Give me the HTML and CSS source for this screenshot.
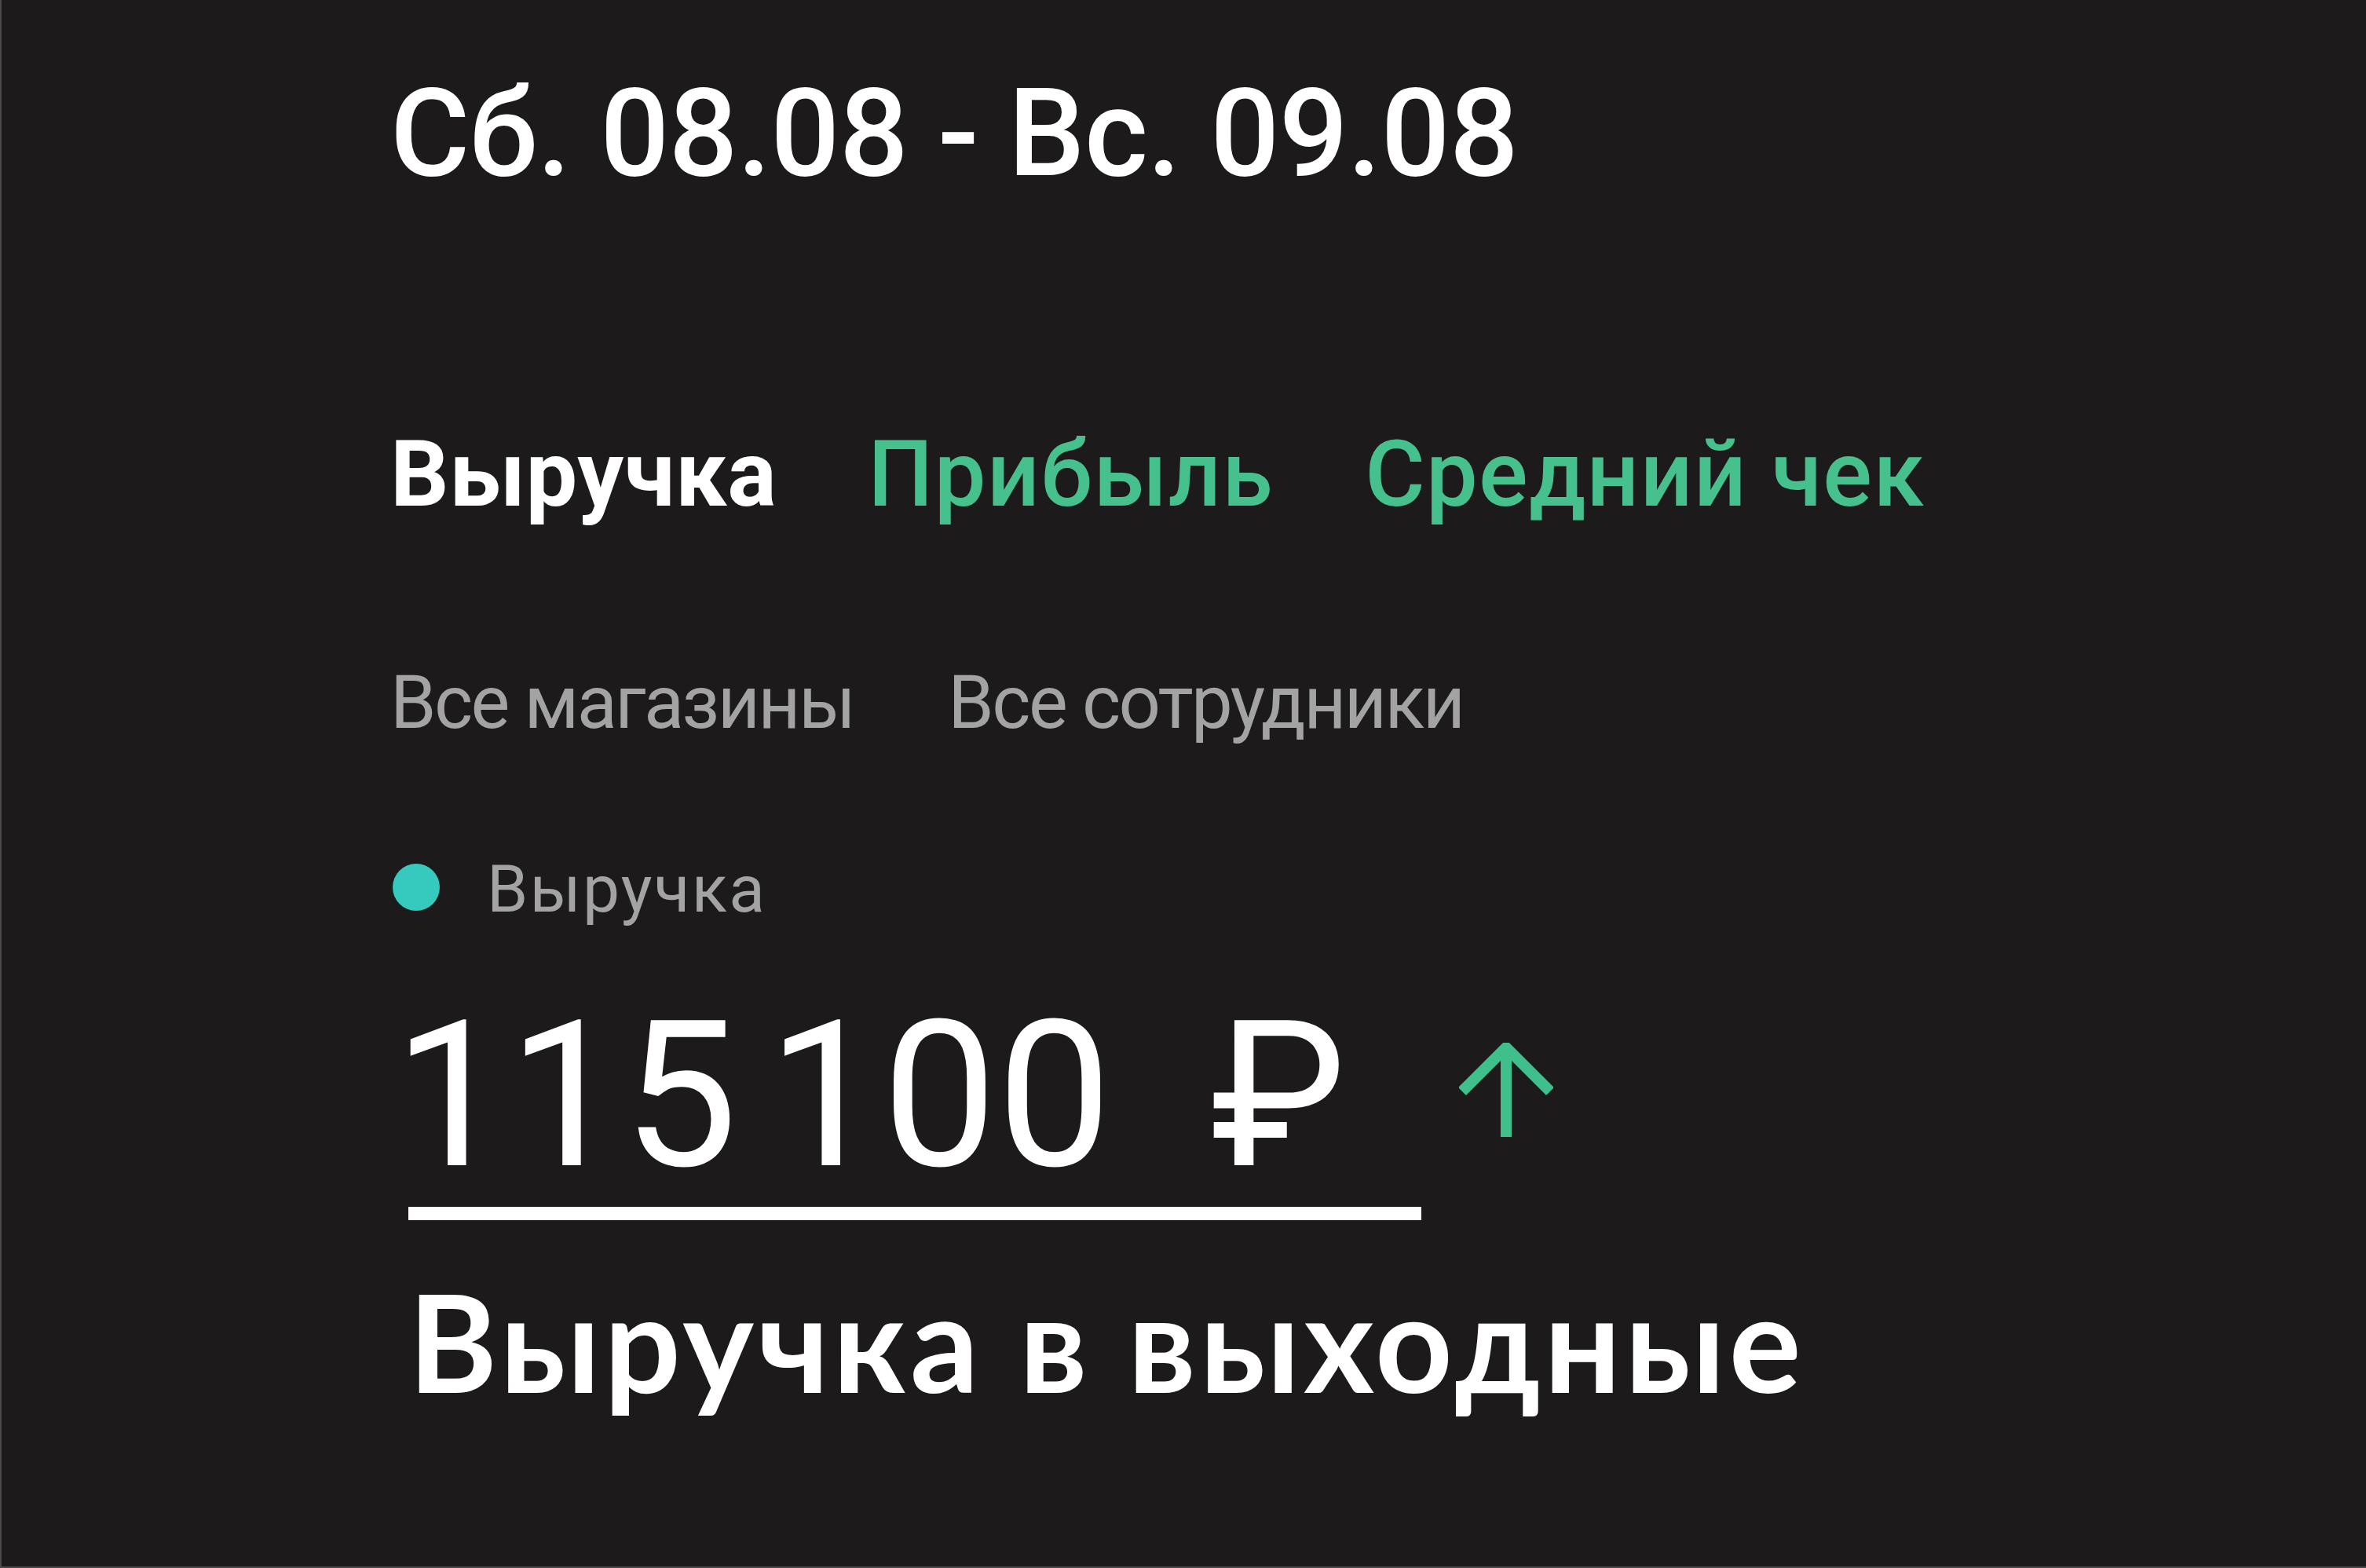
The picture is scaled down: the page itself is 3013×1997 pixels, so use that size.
FILE: index.html
```html
<!DOCTYPE html>
<html lang="ru">
<head>
<meta charset="utf-8">
<title>Выручка в выходные</title>
<link rel="stylesheet" href="styles.css">
</head>
<body>
<main class="screen">
  <section class="card">
    <h1 class="period">Сб. 08.08 - Вс. 09.08</h1>
    <nav class="tabs">
      <span class="tab tab-active">Выручка</span>
      <span class="tab">Прибыль</span>
      <span class="tab">Средний чек</span>
    </nav>
    <div class="filters">
      <span class="filter">Все магазины</span>
      <span class="filter">Все сотрудники</span>
    </div>
    <div class="legend">
      <span class="legend-dot"></span>
      <span class="legend-label">Выручка</span>
    </div>
    <div class="amount">
      <span class="amount-group">115</span>
      <span class="amount-group amount-group-next">100</span>
      <span class="amount-cur">₽</span>
      <svg class="amount-arrow" viewBox="0 0 120 120" width="120" height="120" aria-hidden="true">
        <path d="M60 120 V8 M4 62 L60 6 L116 62" fill="none" stroke="currentColor" stroke-width="14" stroke-linecap="butt" stroke-linejoin="miter"/>
      </svg>
    </div>
  </section>
  <div class="caption-block">
    <div class="rule"></div>
    <p class="caption">Выручка в выходные</p>
  </div>
</main>
</body>
</html>
```

FILE: styles.css
```css
html, body {
  margin: 0;
  padding: 0;
  background: #1c1a1b;
}

.screen {
  width: 3013px;
  height: 1997px;
  box-sizing: border-box;
  border-left: 2px solid #4a4a4a;
  border-bottom: 2px solid #4a4a4a;
  background: #1c1a1b;
  display: flex;
  flex-direction: column;
  padding-left: 495px;
  font-family: Roboto, "Noto Sans", sans-serif;
}

.card {
  display: flex;
  flex-direction: column;
  padding-top: 93px;
}

.period {
  margin: 0;
  font-size: 155px;
  line-height: 1;
  font-weight: 500;
  letter-spacing: -0.7px;
  color: #ffffff;
}

.tabs {
  margin-top: 298px;
  display: flex;
  gap: 116px;
  font-size: 117px;
  line-height: 1;
}

.tab {
  color: #46c08d;
  font-weight: 500;
  letter-spacing: 1.4px;
}

.tab-active {
  color: #ffffff;
  font-weight: 700;
  letter-spacing: 0.5px;
}

.filters {
  margin-top: 185px;
  display: flex;
  gap: 120px;
  font-size: 94px;
  line-height: 1;
  letter-spacing: -2.6px;
  color: #a3a3a3;
}

.legend {
  margin-top: 149px;
  display: flex;
  align-items: center;
  font-size: 84px;
  line-height: 1;
  letter-spacing: 2.2px;
  color: #a3a3a3;
}

.legend-dot {
  width: 60px;
  height: 60px;
  border-radius: 50%;
  background: #36c9bd;
  margin-left: 3px;
  margin-right: 60px;
  margin-top: -6px;
}

.amount {
  margin-top: 90px;
  margin-left: 4px;
  display: flex;
  align-items: center;
  font-size: 260px;
  line-height: 1;
  color: #ffffff;
}

.amount-group-next {
  margin-left: 38px;
}

.amount-cur {
  margin-left: 126px;
}

.amount-arrow {
  width: 120px;
  height: 120px;
  color: #3fbf8c;
  margin-left: 144px;
  margin-top: -14px;
}

.caption-block {
  display: flex;
  flex-direction: column;
  margin-left: 23px;
}

.rule {
  margin-top: 12px;
  width: 1290px;
  height: 17px;
  background: #ffffff;
}

.caption {
  margin: 68px 0 0 0;
  font-family: Lato, "Open Sans", sans-serif;
  font-weight: 700;
  font-size: 172px;
  line-height: 1;
  letter-spacing: 5px;
  color: #ffffff;
}
```
